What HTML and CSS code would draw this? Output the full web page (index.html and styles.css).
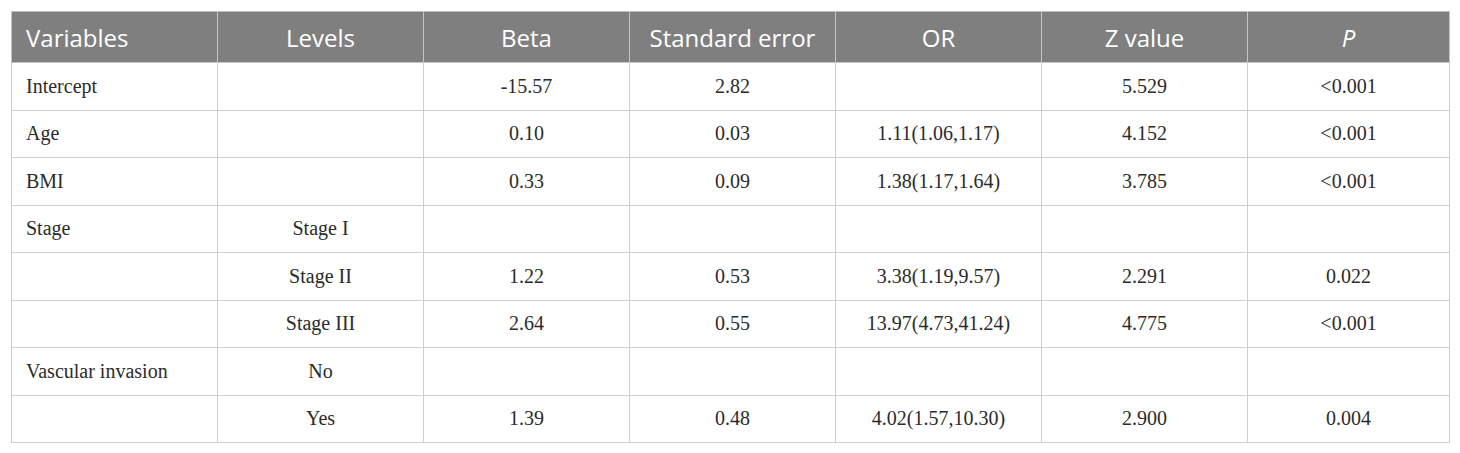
FILE: index.html
```html
<!DOCTYPE html>
<html>
<head>
<meta charset="utf-8">
<link rel="stylesheet" href="styles.css">
</head>
<body>
<div class="wrap">
<table class="tbl">
  <colgroup>
    <col class="c"><col class="c"><col class="c"><col class="c"><col class="c"><col class="c"><col class="c last">
  </colgroup>
  <thead>
    <tr>
      <th class="left">Variables</th>
      <th>Levels</th>
      <th>Beta</th>
      <th>Standard error</th>
      <th>OR</th>
      <th>Z value</th>
      <th><i>P</i></th>
    </tr>
  </thead>
  <tbody>
    <tr><td class="left">Intercept</td><td></td><td>-15.57</td><td>2.82</td><td></td><td>5.529</td><td>&lt;0.001</td></tr>
    <tr><td class="left">Age</td><td></td><td>0.10</td><td>0.03</td><td>1.11(1.06,1.17)</td><td>4.152</td><td>&lt;0.001</td></tr>
    <tr><td class="left">BMI</td><td></td><td>0.33</td><td>0.09</td><td>1.38(1.17,1.64)</td><td>3.785</td><td>&lt;0.001</td></tr>
    <tr><td class="left">Stage</td><td>Stage I</td><td></td><td></td><td></td><td></td><td></td></tr>
    <tr><td class="left"></td><td>Stage II</td><td>1.22</td><td>0.53</td><td>3.38(1.19,9.57)</td><td>2.291</td><td>0.022</td></tr>
    <tr><td class="left"></td><td>Stage III</td><td>2.64</td><td>0.55</td><td>13.97(4.73,41.24)</td><td>4.775</td><td>&lt;0.001</td></tr>
    <tr><td class="left">Vascular invasion</td><td>No</td><td></td><td></td><td></td><td></td><td></td></tr>
    <tr><td class="left"></td><td>Yes</td><td>1.39</td><td>0.48</td><td>4.02(1.57,10.30)</td><td>2.900</td><td>0.004</td></tr>
  </tbody>
</table>
</div>
</body>
</html>
```
FILE: styles.css
```css
html, body {
  margin: 0;
  padding: 0;
  background: #ffffff;
}
.wrap {
  padding: 11px 0 0 11px;
}
.tbl {
  border-collapse: collapse;
  table-layout: fixed;
  width: 1438px;
}
.tbl .c {
  width: 206px;
}
.tbl .last {
  width: 202px;
}
.tbl th {
  background: #7f7f7f;
  color: #ffffff;
  font-family: "Open Sans", "Noto Sans", sans-serif;
  font-weight: 400;
  font-size: 24px;
  height: 50px;
  padding: 0 14px;
  text-align: center;
  border: 1px solid #c4c4c4;
  border-top-color: #bdbdbd;
  white-space: nowrap;
}
.tbl th i {
  font-style: italic;
}
.tbl td {
  font-family: "Liberation Serif", "Times New Roman", serif;
  font-size: 20px;
  color: #2b2b2b;
  height: 46.5px;
  padding: 0 14px;
  text-align: center;
  border: 1px solid #cfcfcf;
  white-space: nowrap;
}
.tbl .left {
  text-align: left;
}
```
